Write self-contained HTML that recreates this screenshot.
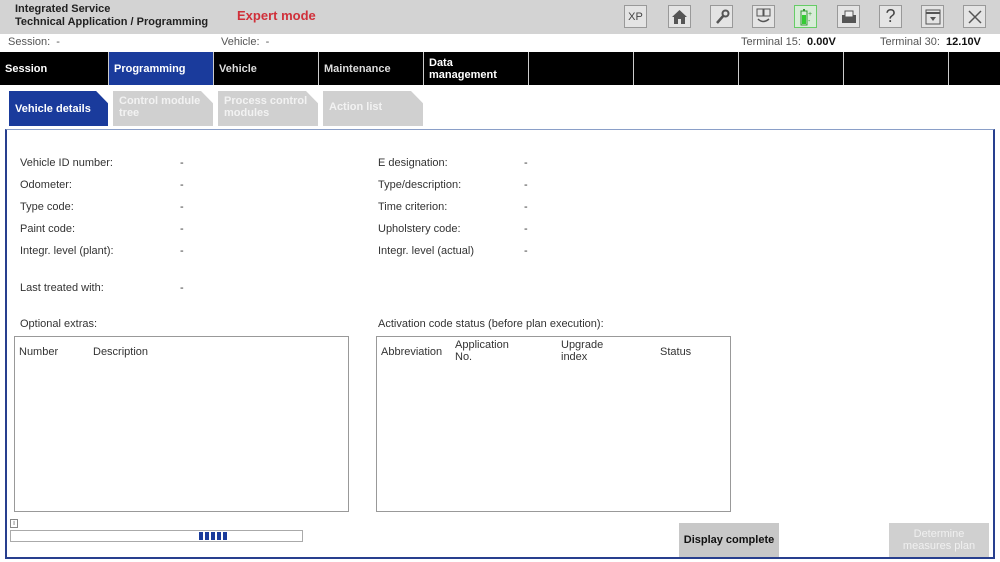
<!DOCTYPE html>
<html><head><style>
*{margin:0;padding:0;box-sizing:border-box}
body{width:1000px;height:562px;background:#fff;font-family:"Liberation Sans",Arial,sans-serif;font-size:11px;color:#333;position:relative;overflow:hidden}
.a{position:absolute}
.hdr{left:0;top:0;width:1000px;height:34px;background:#d3d3d3}
.ic{width:23px;height:23px;top:5px;border:1px solid #999;background:#e4e4e4;display:flex;align-items:center;justify-content:center;color:#444}
.nav{top:52px;left:0;width:1000px;height:33px;background:#000}
.tab{top:52px;height:33px;color:#fff;font-size:11px;font-weight:bold;padding-left:5px;display:flex;align-items:center;border-left:1px solid #ccc;line-height:12px}
.st{top:91px;height:35px;background:#d0d0d0;color:#f2f2f2;font-size:11px;font-weight:bold;padding:4px 6px;line-height:12px;clip-path:polygon(0 0,88% 0,100% 35%,100% 100%,0 100%)}
.lbl{font-size:11px;color:#333}
.box{border:1px solid #999;background:#fff}
</style></head><body>
<div class="a hdr"></div>
<div class="a" style="left:15px;top:3px;font-size:11px;font-weight:bold;color:#222;line-height:13px">Integrated Service<br>Technical Application / Programming</div>
<div class="a" style="left:237px;top:8px;font-size:13px;font-weight:bold;color:#d0303a">Expert mode</div>
<div class="a ic" style="left:624px;font-size:11px">XP</div>
<div class="a ic" style="left:668px"><svg width="17" height="16"><path d="M1 8L8.5 1 16 8H14V15H3V8Z" fill="#555"/><rect x="7" y="10" width="3" height="5" fill="#e4e4e4"/></svg></div>
<div class="a ic" style="left:710px"><svg width="16" height="16"><path d="M3 14L10 6" stroke="#555" stroke-width="2.5"/><circle cx="11.5" cy="4.5" r="3" fill="none" stroke="#555" stroke-width="2"/></svg></div>
<div class="a ic" style="left:752px"><svg width="17" height="17"><rect x="2" y="1" width="6" height="7" fill="none" stroke="#555"/><rect x="9" y="1" width="6" height="7" fill="none" stroke="#555"/><path d="M3 11Q8 16 14 11" fill="none" stroke="#555" stroke-width="1.5"/></svg></div>
<div class="a ic" style="left:794px;border-color:#6c6;background:#d8ecd8"><svg width="16" height="18"><rect x="3" y="3" width="6" height="14" fill="none" stroke="#393" /><rect x="4" y="7" width="4" height="9" fill="#3c3"/><rect x="5" y="1" width="2" height="2" fill="#393"/><text x="10" y="8" font-size="7" fill="#393">+</text><text x="10" y="15" font-size="7" fill="#393">-</text></svg></div>
<div class="a ic" style="left:837px"><svg width="16" height="14"><rect x="1" y="5" width="14" height="8" fill="#555"/><rect x="4" y="1" width="8" height="6" fill="#eee" stroke="#555"/></svg></div>
<div class="a ic" style="left:879px;font-size:18px">?</div>
<div class="a ic" style="left:921px"><svg width="16" height="16"><rect x="1" y="1" width="14" height="14" fill="none" stroke="#555"/><path d="M1 4H15" stroke="#555" stroke-width="2"/><path d="M5 8H11L8 12Z" fill="#555"/></svg></div>
<div class="a ic" style="left:963px"><svg width="16" height="16"><path d="M2 2L14 14M14 2L2 14" stroke="#555" stroke-width="1.5"/></svg></div>

<div class="a" style="left:8px;top:36px;color:#555;font-size:11px">Session: &nbsp;-</div>
<div class="a" style="left:221px;top:36px;color:#555;font-size:11px">Vehicle: &nbsp;-</div>
<div class="a" style="left:741px;top:36px;color:#555;font-size:11px">Terminal 15: &nbsp;<b style="color:#111">0.00V</b></div>
<div class="a" style="left:880px;top:36px;color:#555;font-size:11px">Terminal 30: &nbsp;<b style="color:#111">12.10V</b></div>

<div class="a nav"></div>
<div class="a tab" style="left:0;width:108px;border:none">Session</div>
<div class="a tab" style="left:108px;width:105px;background:#1a3b9c">Programming</div>
<div class="a tab" style="left:213px;width:105px;color:#ddd">Vehicle</div>
<div class="a tab" style="left:318px;width:105px;color:#ddd">Maintenance</div>
<div class="a tab" style="left:423px;width:105px">Data<br>management</div>
<div class="a tab" style="left:528px;width:105px"></div>
<div class="a tab" style="left:633px;width:105px"></div>
<div class="a tab" style="left:738px;width:105px"></div>
<div class="a tab" style="left:843px;width:105px"></div>
<div class="a tab" style="left:948px;width:52px"></div>

<div class="a st" style="left:9px;width:99px;background:#1a3b9c;color:#fff;padding-top:12px">Vehicle details</div>
<div class="a st" style="left:113px;width:100px">Control module<br>tree</div>
<div class="a st" style="left:218px;width:100px">Process control<br>modules</div>
<div class="a st" style="left:323px;width:100px;padding-top:10px">Action list</div>

<div class="a" style="left:5px;top:129px;width:990px;height:430px;border:2px solid #283f8e;border-top:1px solid #8a9fc8"></div>

<div class="a lbl" style="left:20px;top:152px;line-height:22px">Vehicle ID number:<br>Odometer:<br>Type code:<br>Paint code:<br>Integr. level (plant):</div>
<div class="a lbl" style="left:180px;top:152px;line-height:22px">-<br>-<br>-<br>-<br>-</div>
<div class="a lbl" style="left:378px;top:152px;line-height:22px">E designation:<br>Type/description:<br>Time criterion:<br>Upholstery code:<br>Integr. level (actual)</div>
<div class="a lbl" style="left:524px;top:152px;line-height:22px">-<br>-<br>-<br>-<br>-</div>
<div class="a lbl" style="left:20px;top:282px">Last treated with:</div>
<div class="a lbl" style="left:180px;top:282px">-</div>
<div class="a lbl" style="left:20px;top:318px">Optional extras:</div>
<div class="a lbl" style="left:378px;top:318px">Activation code status (before plan execution):</div>

<div class="a box" style="left:14px;top:336px;width:335px;height:176px"></div>
<div class="a lbl" style="left:19px;top:346px">Number</div>
<div class="a lbl" style="left:93px;top:346px">Description</div>
<div class="a box" style="left:376px;top:336px;width:355px;height:176px"></div>
<div class="a lbl" style="left:381px;top:346px">Abbreviation</div>
<div class="a lbl" style="left:455px;top:339px;line-height:12px">Application<br>No.</div>
<div class="a lbl" style="left:561px;top:339px;line-height:12px">Upgrade<br>index</div>
<div class="a lbl" style="left:660px;top:346px">Status</div>

<div class="a" style="left:10px;top:519px;width:8px;height:9px;border:1px solid #888;font-size:7px;line-height:7px;text-align:center;color:#555">i</div>
<div class="a" style="left:10px;top:530px;width:293px;height:12px;border:1px solid #aaa"></div>
<div class="a" style="left:199px;top:532px;width:28px;height:8px;background:repeating-linear-gradient(90deg,#1a3b9c 0 4px,#fff 4px 6px)"></div>

<div class="a" style="left:679px;top:523px;width:100px;height:34px;background:#c8c8c8;color:#111;font-weight:bold;font-size:11px;display:flex;align-items:center;justify-content:center">Display complete</div>
<div class="a" style="left:889px;top:523px;width:100px;height:34px;background:#d0d0d0;color:#f0f0f0;font-size:11px;display:flex;align-items:center;justify-content:center;text-align:center;line-height:12px">Determine<br>measures plan</div>
</body></html>
